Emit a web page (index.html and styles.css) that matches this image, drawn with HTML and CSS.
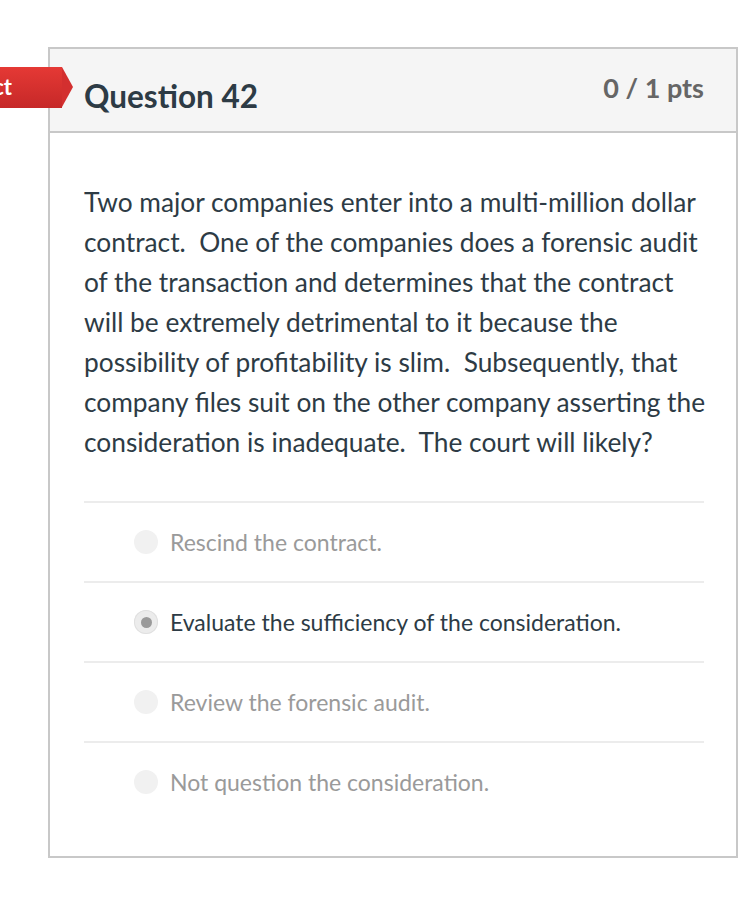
FILE: index.html
```html
<!DOCTYPE html>
<html>
<head>
<meta charset="utf-8">
<link rel="stylesheet" href="styles.css">
</head>
<body>
<div class="page">
  <div class="flag"><span class="flag-text">Incorrect</span></div>
  <div class="card">
    <div class="card-header">
      <h2 class="title">Question 42</h2>
      <div class="points">0 / 1 pts</div>
    </div>
    <div class="card-body">
      <p class="question">Two major companies enter into a multi-million dollar contract.&nbsp; One of the companies does a forensic audit of the transaction and determines that the contract will be extremely detrimental to it because the possibility of profitability is slim.&nbsp; Subsequently, that company files suit on the other company asserting the consideration is inadequate.&nbsp; The court will likely?</p>
      <div class="answers">
        <div class="answer"><span class="radio"></span><span class="label">Rescind the contract.</span></div>
        <div class="answer selected"><span class="radio"></span><span class="label">Evaluate the sufficiency of the consideration.</span></div>
        <div class="answer"><span class="radio"></span><span class="label">Review the forensic audit.</span></div>
        <div class="answer last"><span class="radio"></span><span class="label">Not question the consideration.</span></div>
      </div>
    </div>
  </div>
</div>
</body>
</html>
```
FILE: styles.css
```css
html, body {
  margin: 0;
  padding: 0;
  background: #ffffff;
}
body {
  font-family: Lato, "Open Sans", sans-serif;
  color: #2d3b45;
  width: 739px;
  height: 915px;
  overflow: hidden;
}
.page {
  position: relative;
  padding-top: 47px;
  padding-left: 48px;
}
.card {
  width: 686px;
  border: 2px solid #c8c8c8;
  background: #fff;
}
.card-header {
  display: flex;
  justify-content: space-between;
  align-items: flex-start;
  background: #f5f5f5;
  border-bottom: 2px solid #c8c8c8;
  height: 82px;
  padding: 0 32px 0 34px;
}
.title {
  margin: 0;
  padding-top: 29px;
  font-size: 31.5px;
  font-weight: 700;
  line-height: 36px;
  color: #2d3b45;
}
.points {
  padding-top: 22px;
  font-size: 27px;
  font-weight: 700;
  line-height: 34px;
  color: #666666;
}
.card-body {
  padding: 49px 32px 35px 34px;
}
.question {
  margin: 0 -8px 39px 0;
  font-size: 26.3px;
  line-height: 40px;
  color: #2d3b45;
}
.answer {
  display: flex;
  align-items: center;
  height: 78px;
  border-top: 2px solid #ececec;
  padding-left: 50px;
}
.radio {
  width: 24px;
  height: 24px;
  border-radius: 50%;
  background: #f1f1f1;
  margin-right: 12px;
  flex: none;
  display: flex;
  align-items: center;
  justify-content: center;
}
.selected .radio {
  background: #ececec;
  box-shadow: inset 0 0 0 1px #e0e0e0;
}
.selected .radio::after {
  content: "";
  width: 11px;
  height: 11px;
  border-radius: 50%;
  background: #9a9a9a;
}
.label {
  font-size: 23px;
  color: #9a9a9a;
}
.selected .label {
  color: #2d3b45;
}
.flag {
  position: absolute;
  left: 0;
  top: 67px;
  width: 62px;
  height: 41px;
  background: linear-gradient(#e53935, #c62828);
  overflow: visible;
}
.flag::after {
  content: "";
  position: absolute;
  right: -11px;
  top: 0;
  border-top: 20.5px solid transparent;
  border-bottom: 20.5px solid transparent;
  border-left: 11px solid #d32f2f;
}
.flag-text {
  position: absolute;
  right: 50px;
  top: 6px;
  color: #fff;
  font-weight: 700;
  font-size: 22px;
  white-space: nowrap;
  overflow: hidden;
}
```
